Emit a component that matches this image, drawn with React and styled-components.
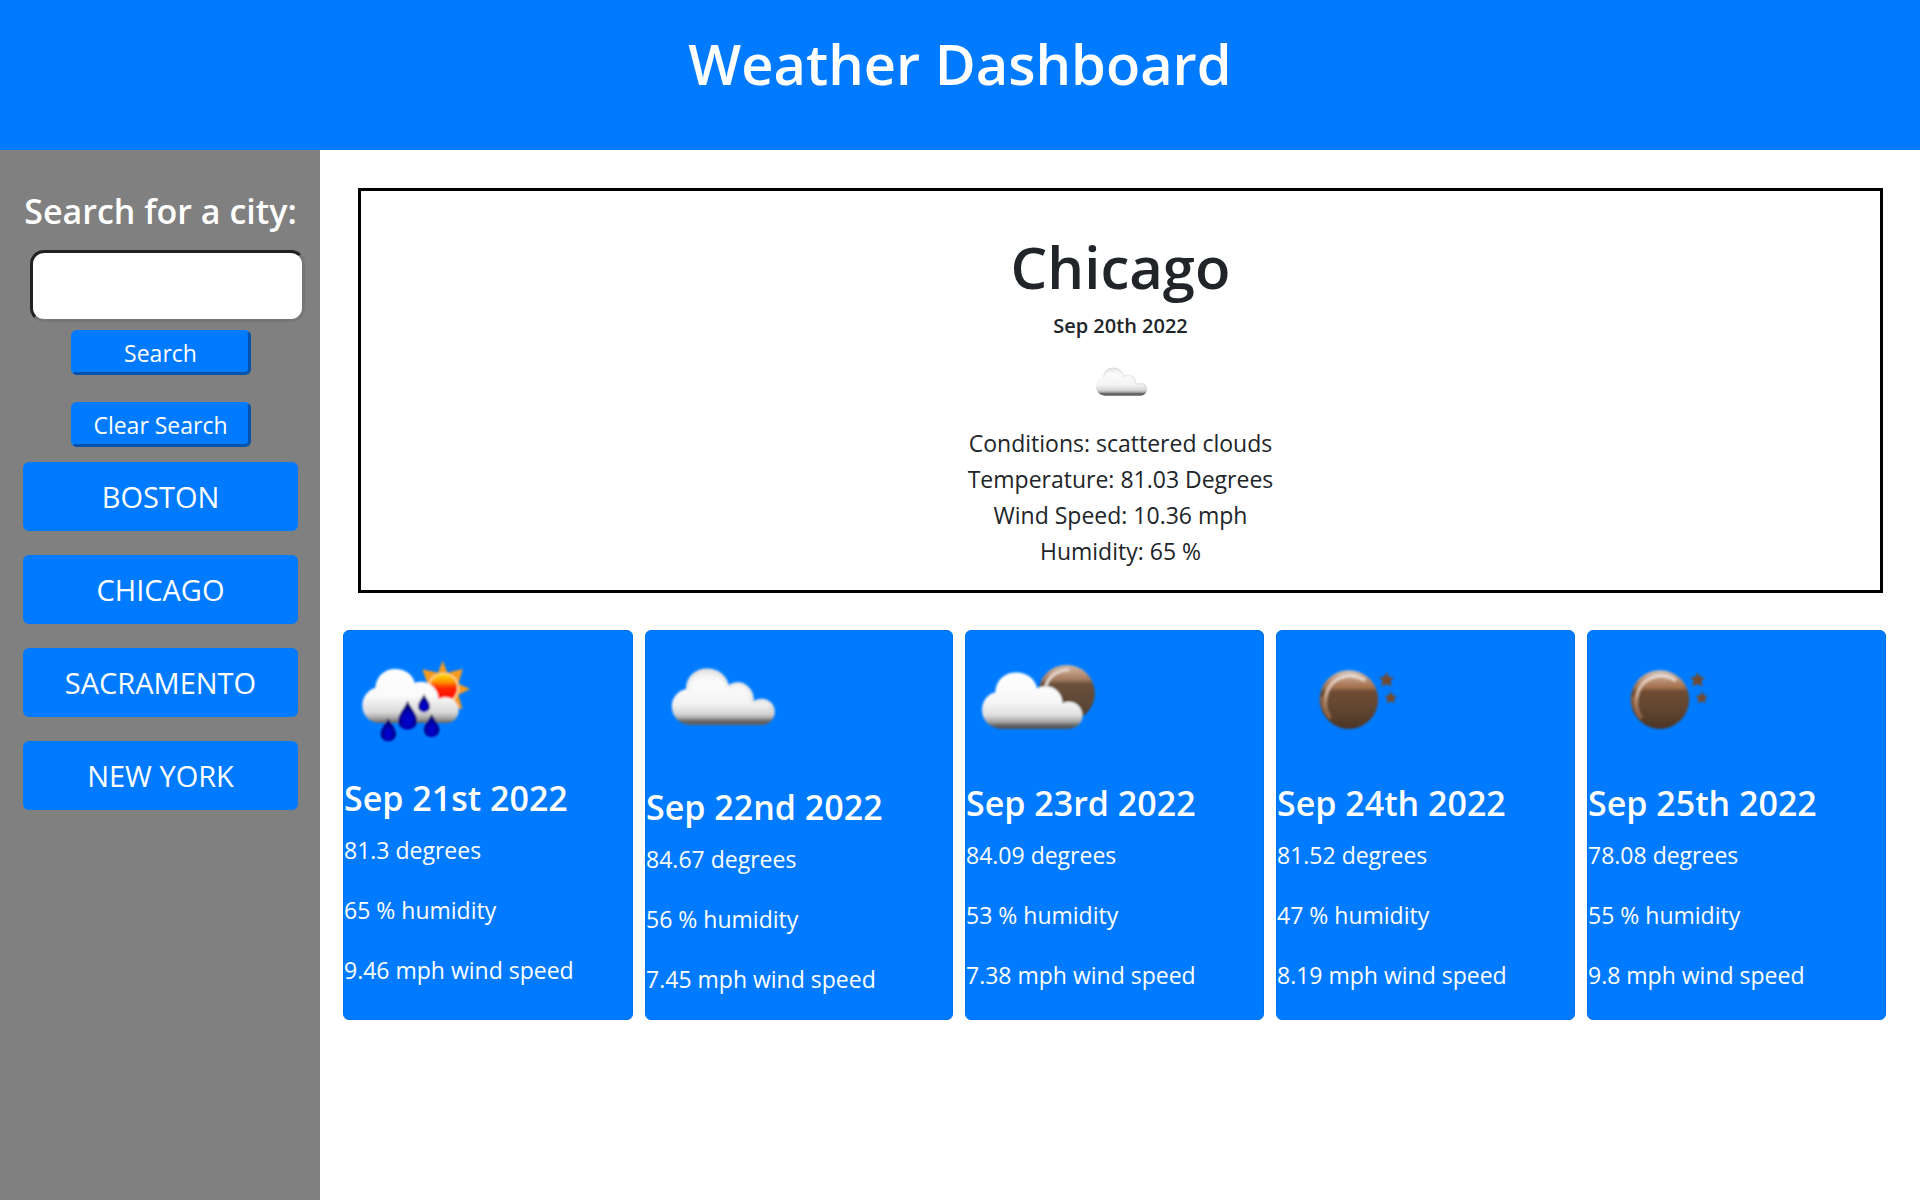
import React, { useState } from "react";
import styled, { createGlobalStyle } from "styled-components";

const BLUE = "#007bff";

const GlobalStyle = createGlobalStyle`
  *, *::before, *::after { box-sizing: border-box; }
  body {
    margin: 0;
    background: #fff;
    color: #212529;
    font-family: "Segoe UI", "Open Sans", "Noto Sans", sans-serif;
    font-size: 23px;
    line-height: 36px;
  }
  h1, h2, h3, p { margin: 0; }
`;

const Page = styled.div`
  display: flex;
  flex-direction: column;
  min-height: 100vh;
`;

const Header = styled.header`
  height: 150px;
  padding-top: 27px;
  background: ${BLUE};
  color: #fff;
  text-align: center;
`;

const Title = styled.h1`
  font-size: 56px;
  font-weight: 600;
  line-height: 72px;
`;

const Body = styled.div`
  display: flex;
  flex: 1;
`;

const Sidebar = styled.aside`
  flex: 0 0 320px;
  padding: 39px 22px 0 23px;
  background: gray;
  color: #fff;
`;

const SearchForm = styled.form`
  display: flex;
  flex-direction: column;
  align-items: center;
`;

const SearchLabel = styled.label`
  font-size: 34px;
  font-weight: 600;
  line-height: 44px;
  white-space: nowrap;
`;

const SearchInput = styled.input`
  width: 100%;
  height: 72px;
  margin: 17px -7px 8px 7px;
  padding: 0 16px;
  border: 3px inset #767676;
  border-radius: 14px;
  background: #fff;
  font: inherit;
`;

const FormButton = styled.button`
  width: 180px;
  height: 45px;
  margin-bottom: ${(p) => (p.$last ? 15 : 27)}px;
  padding: 0;
  border: 3px outset ${BLUE};
  border-radius: 6px;
  background: ${BLUE};
  color: #fff;
  font: inherit;
`;

const CityList = styled.div`
  display: flex;
  flex-direction: column;
  gap: 24px;
`;

const CityButton = styled.button`
  height: 69px;
  padding: 0;
  border: 0;
  border-radius: 6px;
  background: ${BLUE};
  color: #fff;
  font: inherit;
  font-size: 29px;
  text-transform: uppercase;
`;

const Main = styled.main`
  flex: 1;
  min-width: 0;
  padding: 38px 34px 0 23px;
`;

const Current = styled.section`
  display: flex;
  flex-direction: column;
  align-items: center;
  margin: 0 3px 37px 15px;
  padding: 40px 0 21px;
  border: 3px solid #000;
`;

const CityName = styled.h2`
  font-size: 58px;
  font-weight: 600;
  line-height: 72px;
`;

const CurrentDate = styled.h3`
  margin: 13px 0 13px;
  font-size: 20px;
  font-weight: 600;
  line-height: 20px;
`;

const CurrentIcon = styled.div`
  width: 76px;
  height: 76px;
`;

const Forecast = styled.section`
  display: flex;
  gap: 12px;
`;

const Card = styled.article`
  flex: ${(p) => p.$grow} 1 0;
  min-width: 0;
  border: 1px solid #0071eb;
  border-radius: 6px;
  background: ${BLUE};
  color: #fff;
`;

const CardIcon = styled.div`
  width: 50%;
  aspect-ratio: 1;
`;

const CardDate = styled.h3`
  margin: 1px 0 12px;
  font-size: 34px;
  font-weight: 600;
  line-height: 44px;
  white-space: nowrap;
`;

const Reading = styled.p`
  margin-bottom: 24px;

  &:last-child {
    margin-bottom: 22px;
  }
`;

const Drawing = styled.svg`
  display: block;
  width: 100%;
  height: 100%;
`;

function CloudIcon({ id }) {
  const body =
    "M151 317C119 315 96 290 96 260C96 235 113 214 139 208C139 170 168 146 203 146C235 146 261 166 268 196C304 174 344 200 344 244C375 226 407 247 407 276C407 299 391 317 366 317Z";
  return (
    <Drawing viewBox="18 33 462 462" aria-hidden="true">
      <defs>
        <linearGradient id={`${id}Fill`} x1="0" y1="146" x2="0" y2="318" gradientUnits="userSpaceOnUse">
          <stop offset="0" stopColor="#eaeaea" />
          <stop offset=".25" stopColor="#fcfcfc" />
          <stop offset=".62" stopColor="#f3f3f3" />
          <stop offset=".8" stopColor="#d5d5d5" />
          <stop offset=".87" stopColor="#a8a8a8" />
          <stop offset=".92" stopColor="#666" />
          <stop offset="1" stopColor="#5c5c5c" />
        </linearGradient>
        <filter id={`${id}Soft`}><feGaussianBlur stdDeviation="2.6" /></filter>
        <filter id={`${id}Edge`}><feGaussianBlur stdDeviation="6" /></filter>
        <clipPath id={`${id}Clip`}>
          <path d={body} />
        </clipPath>
      </defs>
      <g filter={`url(#${id}Soft)`}>
        <path fill={`url(#${id}Fill)`} d={body} />
        <g clipPath={`url(#${id}Clip)`}>
          <path filter={`url(#${id}Edge)`} fill="none" stroke="#bdbdbd" strokeWidth="8" opacity=".7" d="M139 208C139 170 168 146 203 146C235 146 261 166 268 196C304 174 344 200 344 244C375 226 407 247 407 276" />
        </g>
      </g>
    </Drawing>
  );
}

function RainIcon() {
  const drop = "M0-28C6-13 23 3 23 20C23 34 12 42 0 42C-12 42-23 34-23 20C-23 3-6-13 0-28Z";
  return (
    <Drawing viewBox="12 33 432 432" aria-hidden="true">
      <defs>
        <linearGradient id="rainSun" x1="0" y1="162" x2="0" y2="238" gradientUnits="userSpaceOnUse">
          <stop offset="0" stopColor="#ffd800" />
          <stop offset=".3" stopColor="#ff9a00" />
          <stop offset=".55" stopColor="#ff2600" />
          <stop offset="1" stopColor="#ff0800" />
        </linearGradient>
        <linearGradient id="rainCloud" x1="0" y1="147" x2="0" y2="309" gradientUnits="userSpaceOnUse">
          <stop offset="0" stopColor="#fff" />
          <stop offset=".5" stopColor="#fafafa" />
          <stop offset=".8" stopColor="#dadada" />
          <stop offset=".92" stopColor="#a0a0a0" />
          <stop offset="1" stopColor="#606060" />
        </linearGradient>
        <radialGradient id="rainDrop" cx=".5" cy=".68" r=".55">
          <stop offset="0" stopColor="#0000d8" />
          <stop offset=".5" stopColor="#0000b4" />
          <stop offset="1" stopColor="#00005e" />
        </radialGradient>
        <filter id="rainSoft"><feGaussianBlur stdDeviation="2.4" /></filter>
      </defs>
      <g filter="url(#rainSoft)">
        <path fill="#f79a1c" d="M308 122L322 158L368 147L355 191L390 207L355 224L367 268L322 255L285 257L268 214L262 190L247 148L294 158Z" />
        <circle cx="310" cy="205" r="47" fill="#ffe0a0" />
        <circle cx="310" cy="204" r="42" fill="url(#rainSun)" />
        <path fill="url(#rainCloud)" d="M112 309C86 305 67 284 67 257C67 231 83 210 106 203C109 169 133 147 165 147C195 147 219 164 224 188C259 177 293 198 296 237C323 223 356 240 356 271C356 292 342 307 322 309Z" />
        <path fill="url(#rainDrop)" transform="translate(203 277) scale(1.24)" d={drop} />
        <path fill="url(#rainDrop)" transform="translate(252 244) scale(.78)" d={drop} />
        <path fill="url(#rainDrop)" transform="translate(145 322)" d={drop} />
        <path fill="url(#rainDrop)" transform="translate(275 309)" d={drop} />
      </g>
    </Drawing>
  );
}

function CloudyMoonIcon() {
  return (
    <Drawing viewBox="48 33 446 446" aria-hidden="true">
      <defs>
        <linearGradient id="hiddenMoon" x1="0" y1="136" x2="0" y2="300" gradientUnits="userSpaceOnUse">
          <stop offset="0" stopColor="#cdb8a8" />
          <stop offset=".16" stopColor="#b99379" />
          <stop offset=".26" stopColor="#a27b60" />
          <stop offset=".34" stopColor="#6a503c" />
          <stop offset="1" stopColor="#50402f" />
        </linearGradient>
        <linearGradient id="moonCloud" x1="0" y1="158" x2="0" y2="327" gradientUnits="userSpaceOnUse">
          <stop offset="0" stopColor="#fff" />
          <stop offset=".5" stopColor="#f8f8f8" />
          <stop offset=".75" stopColor="#e0e0e0" />
          <stop offset=".87" stopColor="#a8a8a8" />
          <stop offset=".95" stopColor="#5c5c5c" />
          <stop offset="1" stopColor="#505050" />
        </linearGradient>
        <filter id="cloudMoonSoft"><feGaussianBlur stdDeviation="2.8" /></filter>
      </defs>
      <g filter="url(#cloudMoonSoft)">
        <circle cx="350" cy="220" r="85" fill="url(#hiddenMoon)" />
        <path fill="none" stroke="#e4d6cc" strokeWidth="9" strokeLinecap="round" d="M289 195C300 166 323 151 354 150" />
        <path fill="url(#moonCloud)" d="M153 327C119 325 96 300 96 271C96 244 113 222 136 217C138 180 164 158 200 158C231 158 255 177 262 205C301 187 337 213 338 250C368 236 398 258 398 287C398 310 380 327 355 327Z" />
      </g>
    </Drawing>
  );
}

function MoonIcon({ id }) {
  return (
    <Drawing viewBox="51 33 446 446" aria-hidden="true">
      <defs>
        <linearGradient id={`${id}Fill`} x1="0" y1="152" x2="0" y2="326" gradientUnits="userSpaceOnUse">
          <stop offset="0" stopColor="#d2c1b5" />
          <stop offset=".13" stopColor="#c09a80" />
          <stop offset=".29" stopColor="#a2704d" />
          <stop offset=".36" stopColor="#6f4d34" />
          <stop offset=".7" stopColor="#5f442f" />
          <stop offset="1" stopColor="#4c3527" />
        </linearGradient>
        <linearGradient id={`${id}Rim`} x1="0" y1="160" x2="0" y2="290" gradientUnits="userSpaceOnUse">
          <stop offset="0" stopColor="#eadfd8" />
          <stop offset=".5" stopColor="#cda88f" />
          <stop offset="1" stopColor="#a5744f" stopOpacity=".2" />
        </linearGradient>
        <filter id={`${id}Soft`}><feGaussianBlur stdDeviation="2.6" /></filter>
        <filter id={`${id}Stars`}><feGaussianBlur stdDeviation="3.6" /></filter>
      </defs>
      <g filter={`url(#${id}Soft)`}>
        <circle cx="267" cy="239" r="88" fill={`url(#${id}Fill)`} />
        <path fill="none" stroke="#8e6142" strokeWidth="12" d="M185 230C188 258 195 276 212 295" />
        <path fill="none" stroke={`url(#${id}Rim)`} strokeWidth="10" strokeLinecap="round" d="M205 282C188 246 197 204 226 182C252 164 283 163 312 180" />
      </g>
      <g fill="#754a2c" filter={`url(#${id}Stars)`}>
        <path d="M380 156L387 171L403 172L391 183L396 200L380 192L364 200L369 183L357 172L373 171Z" />
        <path d="M393 214L399 227L411 228L402 237L405 250L393 244L380 250L383 237L374 228L387 227Z" />
      </g>
    </Drawing>
  );
}

const cities = ["Boston", "Chicago", "Sacramento", "New York"];

const days = [
  { date: "Sep 21st 2022", temp: "81.3", humidity: 65, wind: "9.46", grow: 290, icon: <RainIcon /> },
  { date: "Sep 22nd 2022", temp: "84.67", humidity: 56, wind: "7.45", grow: 308, icon: <CloudIcon id="cloudDay" /> },
  { date: "Sep 23rd 2022", temp: "84.09", humidity: 53, wind: "7.38", grow: 299, icon: <CloudyMoonIcon /> },
  { date: "Sep 24th 2022", temp: "81.52", humidity: 47, wind: "8.19", grow: 299, icon: <MoonIcon id="moonA" /> },
  { date: "Sep 25th 2022", temp: "78.08", humidity: 55, wind: "9.8", grow: 299, icon: <MoonIcon id="moonB" /> },
];

export default function App() {
  const [query, setQuery] = useState("");
  return (
    <Page>
      <GlobalStyle />
      <Header>
        <Title>Weather Dashboard</Title>
      </Header>
      <Body>
        <Sidebar>
          <SearchForm onSubmit={(e) => e.preventDefault()}>
            <SearchLabel htmlFor="city">Search for a city:</SearchLabel>
            <SearchInput id="city" type="text" value={query} onChange={(e) => setQuery(e.target.value)} />
            <FormButton type="submit">Search</FormButton>
            <FormButton type="button" $last onClick={() => setQuery("")}>Clear Search</FormButton>
          </SearchForm>
          <CityList>
            {cities.map((c) => (
              <CityButton key={c} type="button">{c}</CityButton>
            ))}
          </CityList>
        </Sidebar>
        <Main>
          <Current>
            <CityName>Chicago</CityName>
            <CurrentDate>Sep 20th 2022</CurrentDate>
            <CurrentIcon><CloudIcon id="cloudNow" /></CurrentIcon>
            <p>Conditions: scattered clouds</p>
            <p>Temperature: 81.03 Degrees</p>
            <p>Wind Speed: 10.36 mph</p>
            <p>Humidity: 65 %</p>
          </Current>
          <Forecast>
            {days.map((d) => (
              <Card key={d.date} $grow={d.grow}>
                <CardIcon>{d.icon}</CardIcon>
                <CardDate>{d.date}</CardDate>
                <Reading>{d.temp} degrees</Reading>
                <Reading>{d.humidity} % humidity</Reading>
                <Reading>{d.wind} mph wind speed</Reading>
              </Card>
            ))}
          </Forecast>
        </Main>
      </Body>
    </Page>
  );
}
